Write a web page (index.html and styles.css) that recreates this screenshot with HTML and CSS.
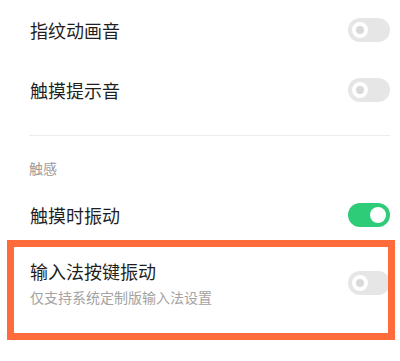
FILE: index.html
```html
<!DOCTYPE html>
<html lang="zh">
<head>
<meta charset="utf-8">
<link rel="stylesheet" href="styles.css">
</head>
<body>
<div class="page">
  <div class="row row-first">
    <div class="label">指纹动画音</div>
    <div class="toggle off"><span class="knob"></span></div>
  </div>
  <div class="row">
    <div class="label">触摸提示音</div>
    <div class="toggle off"><span class="knob"></span></div>
  </div>
  <div class="divider"></div>
  <div class="section">触感</div>
  <div class="row row-touch">
    <div class="label">触摸时振动</div>
    <div class="toggle on"><span class="knob"></span></div>
  </div>
  <div class="row row-ime">
    <div class="text">
      <div class="label">输入法按键振动</div>
      <div class="sub">仅支持系统定制版输入法设置</div>
    </div>
    <div class="toggle off"><span class="knob"></span></div>
    <div class="highlight"></div>
  </div>
</div>
</body>
</html>
```
FILE: styles.css
```css
html, body {
  margin: 0;
  padding: 0;
  background: #ffffff;
}
.page {
  width: 400px;
  height: 361px;
  overflow: hidden;
  font-family: "Noto Sans CJK SC", "Noto Sans", sans-serif;
  color: #1f1f1f;
}
.row {
  display: flex;
  align-items: center;
  justify-content: space-between;
  padding: 0 10px 0 30px;
  height: 60px;
}
.row-first {
  height: 60px;
}
.label {
  font-size: 18px;
  line-height: 24px;
  color: #1f1f1f;
}
.divider {
  height: 1px;
  background: #ececec;
  margin: 15px 10px 0 29px;
}
.section {
  padding: 22px 0 0 29px;
  font-size: 14px;
  line-height: 20px;
  color: #9a9a9a;
  margin-bottom: 12px;
}
.row-touch {
  height: 50px;
}
.row-ime {
  position: relative;
  height: auto;
  padding-top: 19px;
  padding-bottom: 20px;
}
.sub {
  margin-top: 4px;
  font-size: 14px;
  line-height: 20px;
  color: #a3a3a3;
}
.toggle {
  width: 42px;
  height: 24px;
  border-radius: 12px;
  box-sizing: border-box;
  display: flex;
  align-items: center;
  padding: 0 4px;
  flex-shrink: 0;
}
.toggle.off {
  background: #e6e6e6;
  justify-content: flex-start;
}
.toggle.on {
  background: #2ecb78;
  justify-content: flex-end;
}
.knob {
  width: 16px;
  height: 16px;
  border-radius: 50%;
  box-sizing: border-box;
  background: #ffffff;
}
.toggle.off .knob {
  background: #d9d9d9;
  border: 4px solid #ffffff;
}
.highlight {
  position: absolute;
  left: 7px;
  right: 5px;
  top: 0;
  bottom: -13px;
  border: 7px solid #ff6b3b;
  pointer-events: none;
}
```
